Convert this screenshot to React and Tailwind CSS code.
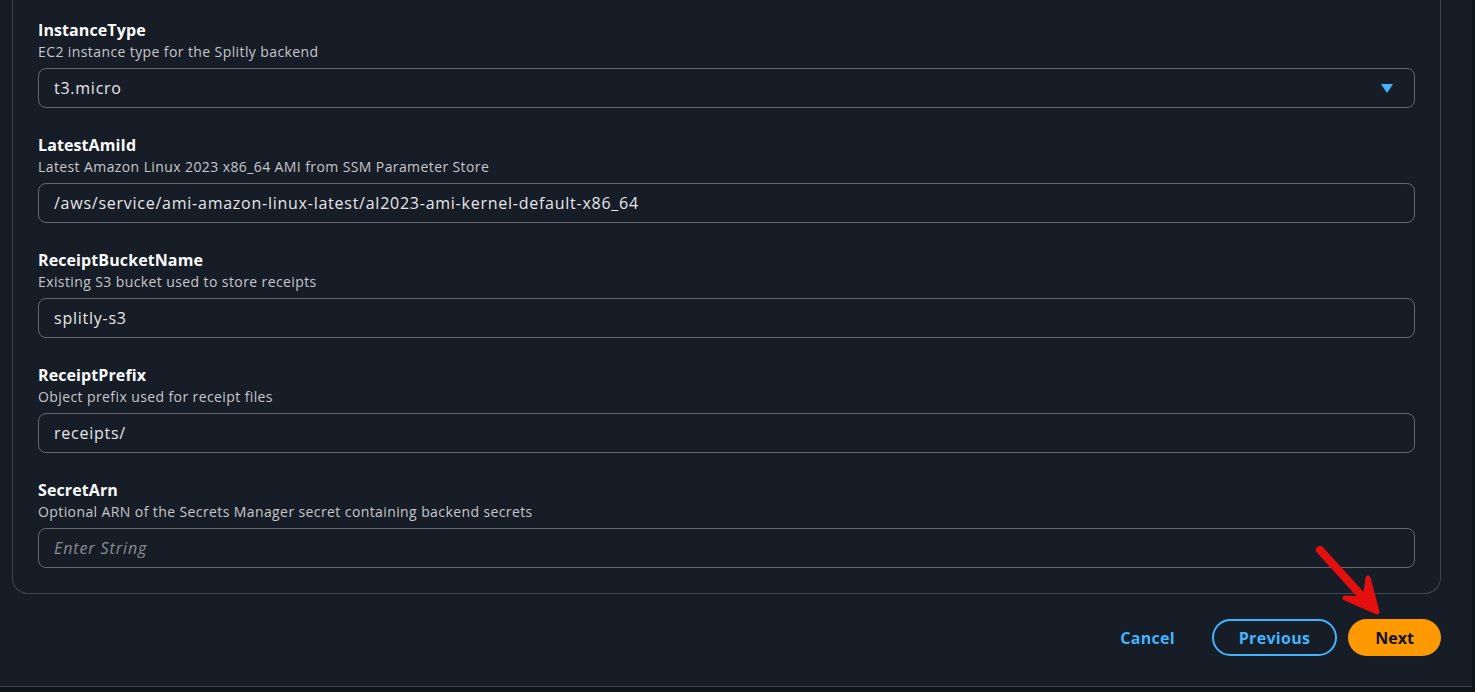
import React from "react";

const fields = [
  { label: "InstanceType", desc: "EC2 instance type for the Splitly backend", value: "t3.micro", select: true },
  { label: "LatestAmiId", desc: "Latest Amazon Linux 2023 x86_64 AMI from SSM Parameter Store", value: "/aws/service/ami-amazon-linux-latest/al2023-ami-kernel-default-x86_64" },
  { label: "ReceiptBucketName", desc: "Existing S3 bucket used to store receipts", value: "splitly-s3" },
  { label: "ReceiptPrefix", desc: "Object prefix used for receipt files", value: "receipts/" },
  { label: "SecretArn", desc: "Optional ARN of the Secrets Manager secret containing backend secrets", value: "", placeholder: "Enter String" },
];

function Field({ label, desc, value, select, placeholder }) {
  return (
    <div className="flex flex-col">
      <div className="text-[16px] leading-[20px] font-bold text-[#fbfbfb] tracking-[0.1px]">{label}</div>
      <div className="text-[14px] leading-[20px] text-[#c6c6cd] mt-[2px] tracking-[0.4px]">{desc}</div>
      <div className="mt-[6px] h-[40px] rounded-[8px] border border-[#656871] flex items-center pl-[15px] pr-[20px]">
        {value ? (
          <span className="text-[16px] text-[#e6e6ea] flex-1 tracking-[0.75px]">{value}</span>
        ) : (
          <span className="text-[16px] italic text-[#8c8c94] flex-1 tracking-[0.9px]">{placeholder}</span>
        )}
        {select && (
          <svg width="14" height="11" viewBox="0 0 14 11">
            <path d="M1 1 H13 L7 10 Z" fill="#42b4ff" />
          </svg>
        )}
      </div>
    </div>
  );
}

export default function App() {
  return (
    <div
      className="relative w-full h-[692px] overflow-hidden bg-[#161d26] flex"
      style={{ fontFamily: '"Open Sans", "Noto Sans", sans-serif' }}
    >
      <div className="flex-1 flex flex-col">
        <div className="ml-[12px] mr-[31px] border border-t-0 border-[#424650] rounded-b-[16px] px-[25px] pt-[20px] pb-[25px] flex flex-col gap-[27px]">
          {fields.map((f) => (
            <Field key={f.label} {...f} />
          ))}
        </div>
        <div className="flex items-center justify-end pr-[31px] mt-[25px] h-[37px]">
          <button className="text-[16px] font-bold text-[#42b4ff] tracking-[0.3px] mr-[37px]">Cancel</button>
          <button className="h-[37px] w-[125px] rounded-full border-2 border-[#42b4ff] text-[16px] font-bold text-[#42b4ff] tracking-[0.3px] mr-[11px]">
            Previous
          </button>
          <button className="h-[37px] w-[93px] rounded-full bg-[#ff9900] text-[16px] font-bold text-[#0f141a]">
            Next
          </button>
        </div>
        <div className="mt-auto h-[6px] border-t border-[#424650] bg-[#0f141a]" />
      </div>
      <div className="w-[3px] bg-[#0f141a]" />
      <svg
        className="absolute left-[1310px] top-[540px]"
        width="80"
        height="80"
        viewBox="0 0 80 80"
        fill="none"
        strokeLinecap="round"
        strokeLinejoin="round"
      >
        <path d="M10 10 L61 66" stroke="#e3100f" strokeWidth="8" />
        <path d="M67 72 L35 58 L55 59 L58 38 Z" fill="#e3100f" stroke="#e3100f" strokeWidth="5" />
      </svg>
    </div>
  );
}
